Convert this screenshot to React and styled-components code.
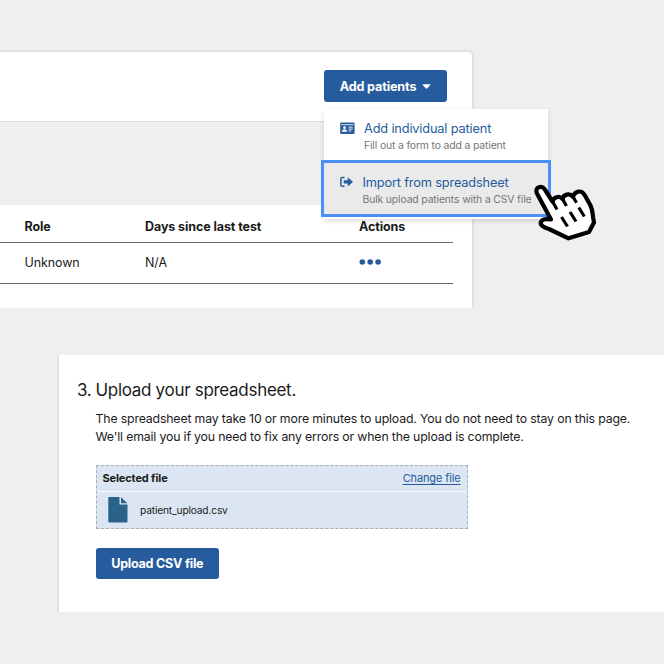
import React from 'react';
import styled, { createGlobalStyle } from 'styled-components';

const GlobalStyle = createGlobalStyle`
  * { box-sizing: border-box; }
  body {
    margin: 0;
    background: #efefef;
    color: #1b1b1b;
    font-family: Inter, "Liberation Sans", sans-serif;
  }
`;

const Page = styled.main`
  width: 664px;
  height: 664px;
  overflow: hidden;
  padding-top: 50px;
  background: #efefef;
`;

const PatientsCard = styled.section`
  position: relative;
  width: 474px;
  height: 258px;
  border: 2px solid #e2e2e2;
  border-left: 0;
  border-bottom: 0;
  border-radius: 0 6px 0 0;
  background: #fff;
`;

const CardHeader = styled.header`
  display: flex;
  justify-content: flex-end;
  height: 70px;
  padding: 18.4px 25px 0 0;
  border-bottom: 1px solid #dfdfdf;
`;

const Button = styled.button`
  display: flex;
  align-items: center;
  justify-content: center;
  gap: 6px;
  width: ${(p) => p.$width}px;
  height: ${(p) => p.$height}px;
  padding: 1px 0 0;
  border: 0;
  border-radius: 3px;
  background: #265c9d;
  color: #fff;
  font: 700 12.6px/16px Inter, sans-serif;
  letter-spacing: ${(p) => p.$tracking}px;
`;

const Filters = styled.div`
  height: 83px;
  background: #efefef;
`;

const Table = styled.div`
  width: 453px;
`;

const TableRow = styled.div`
  display: grid;
  grid-template-columns: 120.5px 214px 1fr;
  align-items: center;
  height: ${(p) => (p.$head ? 38 : 41)}px;
  padding: ${(p) => (p.$head ? 6 : 0)}px 0 0 24.5px;
  border-bottom: 1px solid #666;
  font-size: 12.5px;
  font-weight: ${(p) => (p.$head ? 700 : 400)};
  line-height: 16px;
  letter-spacing: ${(p) => (p.$head ? -0.09 : -0.1)}px;
`;

const Dots = styled.svg`
  display: block;
  margin: -3px 0 0 0;
`;

const Menu = styled.div`
  position: absolute;
  z-index: 1;
  top: 57px;
  left: 324px;
  width: 224px;
  height: 110px;
  background: #fff;
  box-shadow: 0 2px 5px rgba(0, 0, 0, 0.14);
`;

const MenuItem = styled.div`
  display: flex;
  gap: ${(p) => (p.$focused ? 8.5 : 9)}px;
  height: ${(p) => (p.$focused ? 57 : 51)}px;
  margin: ${(p) => (p.$focused ? '0 -3px' : 0)};
  padding: 11px 0 0 16px;
  border: ${(p) => (p.$focused ? '3px solid #4b91f5' : 0)};
  background: ${(p) => (p.$focused ? '#eaeaea' : '#fff')};
  white-space: nowrap;
`;

const MenuLabel = styled.div`
  color: #265c9d;
  font-size: 12.8px;
  line-height: 17px;
  letter-spacing: -0.17px;
`;

const MenuHint = styled.div`
  color: #757575;
  font-size: 10.4px;
  line-height: 17px;
  letter-spacing: -0.145px;
`;

const MenuIcon = styled.svg`
  display: block;
  flex: none;
  margin-top: 2px;
`;

const Pointer = styled.svg`
  position: absolute;
  z-index: 2;
  top: 129px;
  left: 530px;
`;

const UploadCard = styled.section`
  height: 257px;
  margin: 47px 0 0 57px;
  padding: 22.6px 0 0 18px;
  border-left: 2px solid #e1e1e1;
  background: #fff;
`;

const StepTitle = styled.h2`
  display: flex;
  gap: 4px;
  margin: 0;
  font-size: 17px;
  font-weight: 400;
  line-height: 24px;
  letter-spacing: -0.3px;
`;

const StepBody = styled.div`
  padding-left: 18.5px;
`;

const Paragraph = styled.p`
  margin: 8.4px 0 0;
  font-size: 12.3px;
  line-height: 18.3px;
  letter-spacing: -0.158px;
  white-space: nowrap;
`;

const FilePreview = styled.div`
  width: 372px;
  height: 64px;
  margin: 18.4px 0 19px;
  border: 1px dashed #a9aeb1;
  background: #dbe6f2;
`;

const FileHeading = styled.div`
  display: flex;
  justify-content: space-between;
  align-items: center;
  height: 26px;
  border-bottom: 1px solid #f7fafd;
  padding: 0 6px;
  font-size: 11px;
  letter-spacing: -0.13px;
`;

const ChangeLink = styled.a`
  color: #265c9d;
  text-decoration: underline;
  text-underline-offset: 1.5px;
`;

const FileRow = styled.div`
  display: flex;
  align-items: center;
  gap: 12px;
  height: 36px;
  padding-left: 11.5px;
  font-size: 10.2px;
  letter-spacing: -0.16px;
`;

function IdCardIcon() {
  return (
    <MenuIcon width="15" height="13" viewBox="0 0 15 13">
      <rect x="0.2" y="0.6" width="14.4" height="11.4" rx="1.2" fill="#265c9d" />
      <path d="M1.2 2.700H13.600" stroke="#fff" strokeWidth="0.8" />
      <circle cx="4.500" cy="5.700" r="1.350" fill="#fff" />
      <path d="M2 9.800c0-2 1-2.200 2.500-2.200S7 7.800 7 9.800Z" fill="#fff" />
      <path d="M8.600 5.200h4M8.600 7.100h4M8.600 9h2.600" stroke="#fff" strokeWidth="0.9" />
    </MenuIcon>
  );
}

function ImportIcon() {
  return (
    <MenuIcon width="14" height="12" viewBox="0 0 14 12">
      <path d="M4.500 1.400H2.200Q0.900 1.400 0.900 2.700V8.900Q0.900 10.200 2.200 10.200H4.500" fill="none" stroke="#265c9d" strokeWidth="1.500" />
      <path d="M4.200 4.200H7.700V2Q7.700 1.200 8.400 1.700L12.600 5.400Q13 5.800 12.600 6.200L8.400 9.900Q7.700 10.400 7.700 9.600V7.400H4.200Q3.700 7.400 3.700 6.900V4.700Q3.700 4.200 4.200 4.200Z" fill="#265c9d" />
    </MenuIcon>
  );
}

function HandPointer() {
  return (
    <Pointer width="70" height="64" viewBox="530 181 70 64">
      <path
        d="M537.500 188C540.500 185.800 543.500 187 545.200 190L552.500 201.500C553.500 197 559.500 195.300 562.500 199C563.500 194.500 569.500 192.500 573 196.800C575 190.500 581.500 189.800 584.500 194.800L590.500 205.500C592.800 210.500 592.500 213 593.200 218L594 222.500L589 232L568.500 238.300L549 229C544 227.500 539.500 225 541 221.800C542.500 218.500 547.500 219 551 219.500L536.700 193Q535.800 189.700 537.500 188Z"
        fill="#fff"
        stroke="#000"
        strokeWidth="4.200"
        strokeLinejoin="round"
      />
      <path
        d="M552.500 201.500l4.500 8M562.500 199l4 7M573 196.800l3.500 6M561.500 217l6 9.500M570 212l6 9.500M578.800 207.500l5.500 9"
        fill="none"
        stroke="#000"
        strokeWidth="3.200"
      />
    </Pointer>
  );
}

export default function App() {
  return (
    <>
      <GlobalStyle />
      <Page>
        <PatientsCard>
          <CardHeader>
            <Button $width={123} $height={32} $tracking={-0.14}>
              Add patients
              <svg width="9" height="5" viewBox="0 0 9 5">
                <path d="M1 0.300H8Q8.800 0.400 8.300 1L5 4.500Q4.500 4.900 4 4.500L0.700 1Q0.200 0.400 1 0.300Z" fill="#fff" />
              </svg>
            </Button>
          </CardHeader>
          <Filters />
          <Table>
            <TableRow $head>
              <span>Role</span>
              <span>Days since last test</span>
              <span>Actions</span>
            </TableRow>
            <TableRow>
              <span>Unknown</span>
              <span>N/A</span>
              <Dots width="23" height="6" viewBox="0 0 23 6">
                <g fill="#265c9d">
                  <circle cx="3.300" cy="3" r="2.800" />
                  <circle cx="11.200" cy="3" r="2.800" />
                  <circle cx="19.100" cy="3" r="2.800" />
                </g>
              </Dots>
            </TableRow>
          </Table>
          <Menu>
            <MenuItem>
              <IdCardIcon />
              <div>
                <MenuLabel>Add individual patient</MenuLabel>
                <MenuHint>Fill out a form to add a patient</MenuHint>
              </div>
            </MenuItem>
            <MenuItem $focused>
              <ImportIcon />
              <div>
                <MenuLabel>Import from spreadsheet</MenuLabel>
                <MenuHint>Bulk upload patients with a CSV file</MenuHint>
              </div>
            </MenuItem>
          </Menu>
          <HandPointer />
        </PatientsCard>
        <UploadCard>
          <StepTitle>
            <span>3.</span>
            <span>Upload your spreadsheet.</span>
          </StepTitle>
          <StepBody>
            <Paragraph>
              The spreadsheet may take 10 or more minutes to upload. You do not need to stay on this page.
              <br />
              We'll email you if you need to fix any errors or when the upload is complete.
            </Paragraph>
            <FilePreview>
              <FileHeading>
                <strong>Selected file</strong>
                <ChangeLink>Change file</ChangeLink>
              </FileHeading>
              <FileRow>
                <svg width="20" height="26" viewBox="0 0 20 26">
                  <path d="M1 0H11.500V7.500H19.500V24.500Q19.500 25.500 18.500 25.500H1Q0.300 25.500 0.300 24.500V1Q0.300 0 1 0Z" fill="#2b628a" />
                  <path d="M13 0.200L19.300 6.200H13Z" fill="#2b628a" />
                </svg>
                <span>patient_upload.csv</span>
              </FileRow>
            </FilePreview>
            <Button $width={123.500} $height={31} $tracking={-0.26}>Upload CSV file</Button>
          </StepBody>
        </UploadCard>
      </Page>
    </>
  );
}
